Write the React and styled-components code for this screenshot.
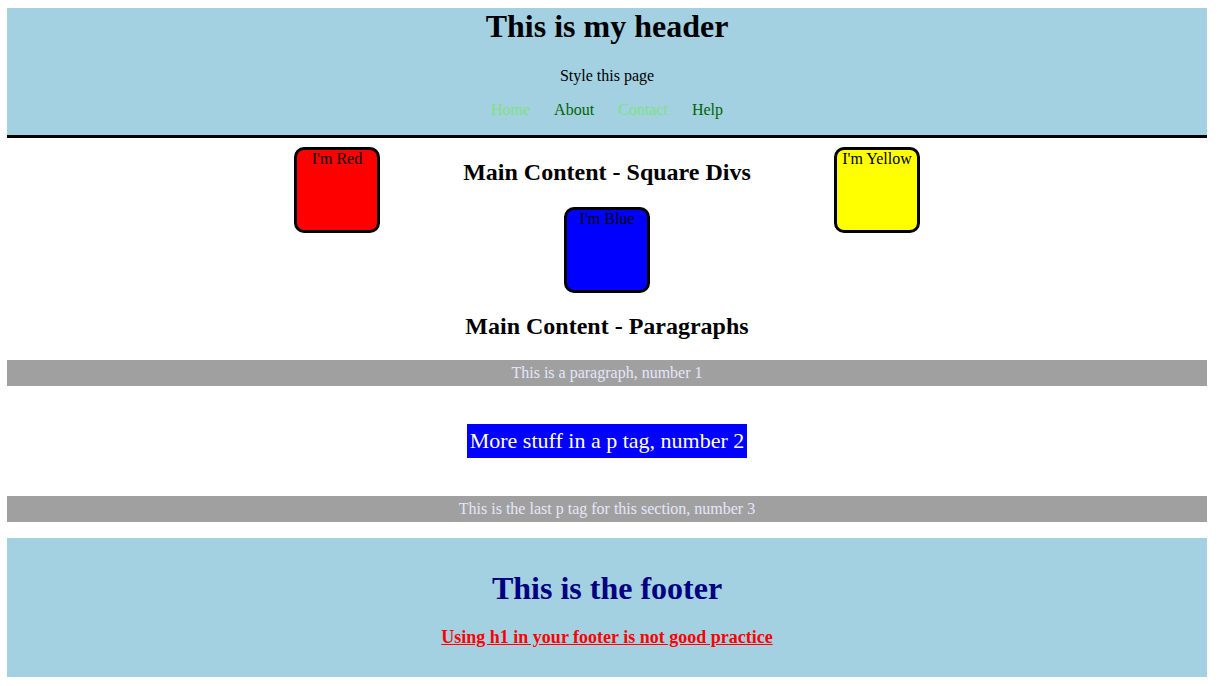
import React from 'react';
import styled, { createGlobalStyle } from 'styled-components';

const GlobalStyle = createGlobalStyle`
  body {
    margin: 8px 10px 0 7px;
    background: #ffffff;
    font-family: "Liberation Serif", "Times New Roman", serif;
    color: #000000;
  }
`

const Header = styled.header`
  background-color: #a3d1e1;
  border-bottom: 3px solid #000000;
  text-align: center;
  padding-bottom: 16px;
`

const Title = styled.h1`
  margin: 0;
  font-size: 32px;
  line-height: 37px;
  font-weight: bold;
  color: ${props => props.color || '#000000'};
`

const Subtitle = styled.p`
  margin: 22px 0 0;
  font-size: 16px;
  line-height: 18px;
`

const Nav = styled.nav`
  display: flex;
  justify-content: center;
  gap: 24px;
  margin-top: 16px;
  font-size: 16px;
  line-height: 18px;
`

const NavLink = styled.a`
  color: ${props => (props.visited ? '#006400' : '#7ee27e')};
  text-decoration: none;
  cursor: pointer;
`

const SquareRow = styled.section`
  display: grid;
  grid-template-columns: 86px 1fr 86px;
  align-items: start;
  width: 626px;
  margin: 0 auto;
`

const CenterColumn = styled.div`
  display: flex;
  flex-direction: column;
  align-items: center;
`

const SectionTitle = styled.h2`
  margin: ${props => props.margin || '20px 0 0'};
  font-size: 24px;
  line-height: 28px;
  font-weight: bold;
  text-align: center;
`

const Square = styled.div`
  box-sizing: border-box;
  width: 86px;
  height: 86px;
  margin-top: ${props => props.top || '9px'};
  border: 3px solid #000000;
  border-radius: 10px;
  background-color: ${props => props.color};
  text-align: center;
  font-size: 16px;
  line-height: 18px;
`

const GrayParagraph = styled.p`
  margin: 0;
  padding: 4px 0;
  background-color: #a0a0a0;
  color: #e6e6fa;
  text-align: center;
  font-size: 16px;
  line-height: 18px;
`

const BlueParagraph = styled.p`
  width: fit-content;
  margin: 38px auto;
  padding: 4px 3px;
  background-color: #0000ff;
  color: #ffffff;
  font-size: 22px;
  line-height: 26px;
`

const Footer = styled.footer`
  margin-top: 16px;
  padding: 10px 0;
  background-color: #a3d1e1;
  text-align: center;

  h1 {
    margin: 22px 0 20px;
  }
`

const FooterNote = styled.p`
  margin: 0 0 19px;
  font-size: 18px;
  line-height: 21px;
  font-weight: bold;
`

const FooterLink = styled.a`
  color: #ff0000;
  text-decoration: underline;
  cursor: pointer;
`

const App = () => {
  return (
    <>
      <GlobalStyle />
      <Header>
        <Title>This is my header</Title>
        <Subtitle>Style this page</Subtitle>
        <Nav>
          <NavLink>Home</NavLink>
          <NavLink visited>About</NavLink>
          <NavLink>Contact</NavLink>
          <NavLink visited>Help</NavLink>
        </Nav>
      </Header>

      <main>
        <SquareRow>
          <Square color='#ff0000'>I'm Red</Square>
          <CenterColumn>
            <SectionTitle>Main Content - Square Divs</SectionTitle>
            <Square color='#0000ff' top='21px'>I'm Blue</Square>
          </CenterColumn>
          <Square color='#ffff00'>I'm Yellow</Square>
        </SquareRow>

        <SectionTitle margin='19px 0 20px'>Main Content - Paragraphs</SectionTitle>
        <GrayParagraph>This is a paragraph, number 1</GrayParagraph>
        <BlueParagraph>More stuff in a p tag, number 2</BlueParagraph>
        <GrayParagraph>This is the last p tag for this section, number 3</GrayParagraph>
      </main>

      <Footer>
        <Title color='#000080'>This is the footer</Title>
        <FooterNote>
          <FooterLink>Using h1 in your footer is not good practice</FooterLink>
        </FooterNote>
      </Footer>
    </>
  )
}

export default App;
